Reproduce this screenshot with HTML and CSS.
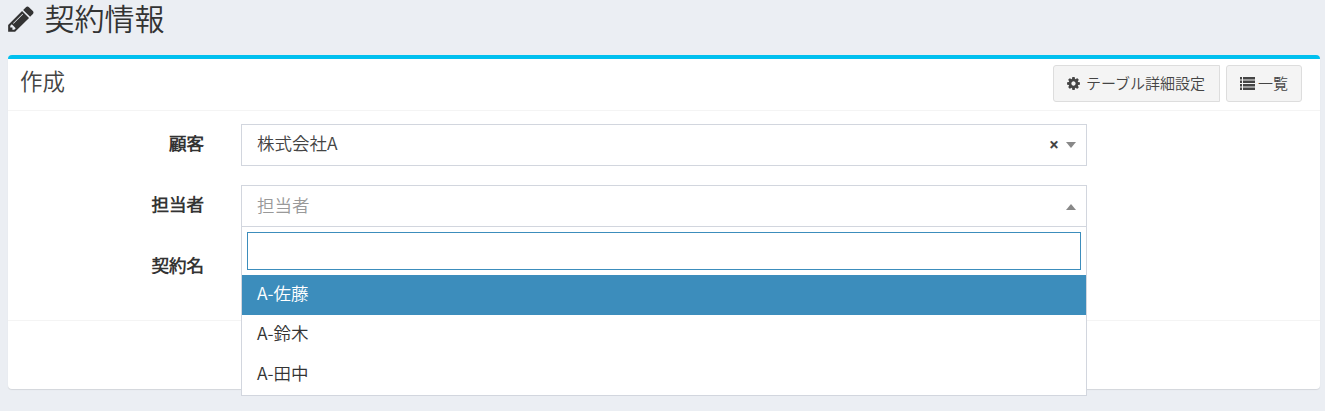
FILE: index.html
```html
<!DOCTYPE html>
<html lang="ja">
<head>
<meta charset="utf-8">
<title>契約情報</title>
<link rel="stylesheet" href="styles.css">
</head>
<body>
<header class="page-header">
  <svg class="icon-pencil" viewBox="0 0 1792 1792"><path d="M491 1536l91-91-235-235-91 91v107h128v128h107zm523-928q0-22-22-22-10 0-17 7l-542 542q-7 7-7 17 0 22 22 22 10 0 17-7l542-542q7-7 7-17zm-54-192l416 416-832 832h-416v-416zm683 96q0 53-37 90l-166 166-416-416 166-165q36-38 90-38 53 0 91 38l235 234q37 39 37 91z"/></svg>
  <h1>契約情報</h1>
</header>
<main class="box">
  <div class="box-header">
    <h2>作成</h2>
    <div class="tools">
      <button class="btn btn-settings"><svg class="icon-cog" viewBox="0 0 1792 1792"><path d="M1152 896q0-106-75-181t-181-75-181 75-75 181 75 181 181 75 181-75 75-181zm512-109v222q0 12-8 23t-20 13l-185 28q-19 54-39 91 35 50 107 138 10 12 10 25t-9 23q-27 37-99 108t-94 71q-12 0-26-9l-138-108q-44 23-91 38-16 136-29 186-7 28-36 28h-222q-14 0-24.5-8.5t-11.5-21.5l-28-184q-49-16-90-37l-141 107q-10 9-25 9-14 0-25-11-126-114-165-168-7-10-7-23 0-12 8-23 15-21 51-66.5t54-70.5q-27-50-41-99l-183-27q-13-2-21-12.5t-8-23.5v-222q0-12 8-23t19-13l186-28q14-46 39-92-40-57-107-138-10-12-10-24 0-10 9-23 26-36 98.5-107.5t94.5-71.5q13 0 26 10l138 107q44-23 91-38 16-136 29-186 7-28 36-28h222q14 0 24.5 8.5t11.5 21.5l28 184q49 16 90 37l142-107q9-9 24-9 13 0 25 10 129 119 165 170 7 8 7 22 0 12-8 23-15 21-51 66.5t-54 70.5q26 50 41 98l183 28q13 2 21 12.5t8 23.5z"/></svg><span>テーブル詳細設定</span></button>
      <button class="btn btn-list"><svg class="icon-list" viewBox="0 0 15 13"><path d="M0 0h2v2.5H0zM3 0h12v2.5H3zM0 3.5h2v2.4H0zM3 3.5h12v2.4H3zM0 7h2v2.4H0zM3 7h12v2.4H3zM0 10.5h2v2.4H0zM3 10.5h12v2.4H3z"/></svg><span>一覧</span></button>
    </div>
  </div>
  <div class="box-body">
    <div class="row">
      <label>顧客</label>
      <div class="select"><span>株式会社A</span><b class="clear">×</b><i class="arrow"></i></div>
    </div>
    <div class="row">
      <label>担当者</label>
      <div class="select open"><span class="placeholder">担当者</span><i class="arrow up"></i>
        <div class="dropdown">
          <input class="search" type="text">
          <ul>
            <li class="active">A-佐藤</li>
            <li>A-鈴木</li>
            <li>A-田中</li>
          </ul>
        </div>
      </div>
    </div>
    <div class="row">
      <label>契約名</label>
    </div>
  </div>
  <div class="box-footer"></div>
</main>
</body>
</html>
```

FILE: styles.css
```css
* { box-sizing: border-box; }
body {
  margin: 0;
  height: 411px;
  overflow: hidden;
  background: #ebeef3;
  color: #333;
  font-family: "Noto Sans CJK JP DemiLight", "Noto Sans CJK JP", sans-serif;
  font-size: 17.5px;
  font-weight: 350;
}
h1, h2, ul { margin: 0; padding: 0; font-weight: 350; }
svg { fill: currentColor; flex: none; }
.page-header { display: flex; height: 55px; padding-left: 5.5px; }
.icon-pencil { width: 30px; height: 30px; margin-top: 4px; }
h1 { margin-left: 9px; font-size: 30px; line-height: 34px; }
.box {
  width: 1312px;
  height: 334px;
  margin-left: 8px;
  background: #fff;
  border-top: 4px solid #00c0ef;
  border-radius: 4px;
  box-shadow: 0 1px 1px rgba(0, 0, 0, .1);
}
.box-header {
  display: flex;
  justify-content: space-between;
  height: 52px;
  padding: 6px 18px 0 12px;
  border-bottom: 1px solid #f4f4f4;
}
h2 { color: #444; font-size: 22.5px; line-height: 31px; }
.tools { display: flex; gap: 6px; }
.btn {
  display: flex;
  align-items: center;
  height: 37px;
  padding: 0 13px;
  border: 1px solid #ddd;
  border-radius: 3px;
  background: #f4f4f4;
  color: #444;
  font: 350 15px "Noto Sans CJK JP DemiLight", "Noto Sans CJK JP", sans-serif;
}
.btn span { height: 35px; line-height: 33px; white-space: nowrap; }
.btn-settings { width: 167px; padding-left: 12px; border-radius: 3px 0 0 3px; gap: 5px; }
.btn-list { width: 76px; gap: 3px; }
.icon-cog { width: 15px; height: 15px; }
.icon-list { width: 15px; height: 13px; }
.box-body { display: flex; flex-direction: column; gap: 19px; height: 210px; padding-top: 13px; border-bottom: 1px solid #f4f4f4; }
.row { display: grid; grid-template-columns: 196px 846px; column-gap: 37px; height: 42px; }
label { text-align: right; font-weight: 700; line-height: 38px; }
.select {
  position: relative;
  display: flex;
  align-items: center;
  height: 42px;
  padding: 0 10px 0 15px;
  border: 1px solid #d2d6de;
  background: #fff;
  color: #444;
}
.select > span { flex: 1; height: 40px; line-height: 36px; }
.select > .placeholder { color: #999; line-height: 37px; }
.clear { margin-right: 7px; font: 700 17.5px/38px "Open Sans", sans-serif; height: 40px; }
.arrow { border: 5px solid transparent; border-top: 6px solid #888; border-bottom: 0; }
.arrow.up { margin-top: 2px; border-top: 0; border-bottom: 6px solid #888; }
.dropdown {
  position: absolute;
  z-index: 2;
  top: 40px;
  left: -1px;
  width: 846px;
  height: 170px;
  padding-top: 5px;
  border: 1px solid #d2d6de;
  background: #fff;
  color: #333;
}
.search { display: block; width: 834px; height: 38px; margin: 0 5px 5px; border: 1px solid #3c8dbc; outline: 0; }
ul { list-style: none; }
li { height: 40px; padding-left: 15px; line-height: 35px; }
li.active { background: #3c8dbc; color: #fff; }
```
